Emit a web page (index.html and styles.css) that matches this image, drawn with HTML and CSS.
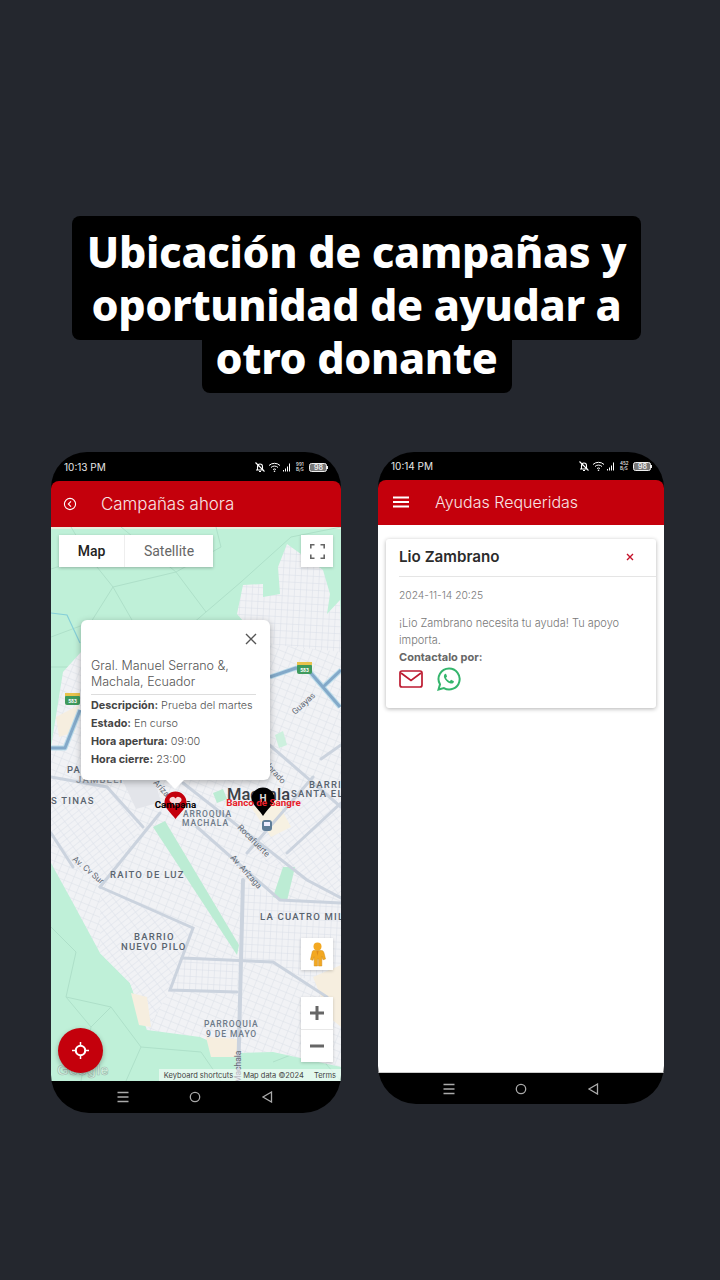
FILE: index.html
```html
<!DOCTYPE html>
<html lang="es">
<head>
<meta charset="utf-8">
<title>Ubicación de campañas</title>
<link rel="stylesheet" href="styles.css">
</head>
<body>
<svg class="defs" width="0" height="0" aria-hidden="true">
  <defs>
    <pattern id="gridA" width="8" height="7" patternUnits="userSpaceOnUse" patternTransform="rotate(22)">
      <rect width="8" height="7" fill="#f1f2f5"/>
      <path d="M0 0H8M0 0V7" stroke="#dbe0e8" stroke-width="1" fill="none"/>
    </pattern>
    <pattern id="gridB" width="9" height="5" patternUnits="userSpaceOnUse" patternTransform="rotate(-38)">
      <rect width="9" height="5" fill="#f1f2f5"/>
      <path d="M0 0H9M0 0V5" stroke="#dce1e9" stroke-width="1" fill="none"/>
    </pattern>
    <pattern id="gridC" width="6" height="7" patternUnits="userSpaceOnUse" patternTransform="rotate(3)">
      <rect width="6" height="7" fill="#f1f2f5"/>
      <path d="M0 0H6M0 0V7" stroke="#d9dfe8" stroke-width="1" fill="none"/>
    </pattern>
    <symbol id="status" viewBox="0 0 76 12">
      <path d="M3.500 9V5.500a2.500 2.500 0 0 1 5 0V9M2 9h8M5 10.500h2M1.500 1.500l9 9" fill="none" stroke="#fff" stroke-width="1.100"/>
      <path d="M15 4.500a8 8 0 0 1 11 0M17 6.500a5 5 0 0 1 7 0M19 8.500a2.500 2.500 0 0 1 3 0" fill="none" stroke="#fff" stroke-width="1"/>
      <circle cx="20.500" cy="10.300" r=".8" fill="#fff"/>
      <path d="M29 9h1v1.500h-1zM31 7.500h1v3h-1zM33 5.500h1v5h-1zM35 2.500h1v8h-1z" fill="#fff"/>
      <rect x="55.500" y="2.500" width="17" height="8" rx="2" fill="#777" stroke="#eee" stroke-width="1"/>
      <rect x="73" y="5" width="1" height="3" fill="#eee"/>
    </symbol>
  </defs>
</svg>

<header class="caption">
  <div class="caption-block caption-wide">Ubicación de campañas y<br>oportunidad de ayudar a</div>
  <div class="caption-block caption-narrow">otro donante</div>
</header>

<main class="phones">
  <section class="phone phone-left">
    <div class="status">
      <span class="clock">10:13 PM</span>
      <span class="status-icons">
        <svg class="status-svg" viewBox="0 0 76 12"><use href="#status"/></svg>
        <span class="speed">991<br>B/S</span>
        <span class="battery-num">98</span>
      </span>
    </div>
    <div class="appbar appbar-left">
      <svg class="back" viewBox="0 0 14 14"><circle cx="7" cy="7" r="5.600" fill="none" stroke="#fff" stroke-width="1.100"/><path d="M8 4.300L5.300 7 8 9.700" fill="none" stroke="#fff" stroke-width="1.100"/></svg>
      <h1 class="appbar-title appbar-title-left">Campañas ahora</h1>
    </div>
    <div class="map">
      <svg class="map-art" viewBox="0 0 290 554" width="290" height="554">
        <rect width="290" height="554" fill="#bff0d8"/>
        <rect width="290" height="2" fill="#e9ebdc"/>
        <g fill="none" stroke="#aee0c9" stroke-width="1">
          <path d="M0 42L38 30L62 60L40 95L0 110M62 60L125 45L170 20L165 0M38 30L20 0M62 60L85 100L55 140M125 45L155 85L120 115L85 100M155 85L190 55M70 0L125 45M190 55L240 10L290 0M120 115L150 135M0 140L55 140"/>
          <path d="M0 400L25 425L15 470L40 500L30 554M15 470L60 480L90 520L75 554M60 480L40 500M90 520L150 525L170 554M222 535L260 520L290 554"/>
        </g>
        <path d="M0 86L16 88L29 116" fill="none" stroke="#86cfd8" stroke-width="1.200"/>
        <path d="M236 17L272 43L279 67L276 87L289 73L290 110L290 130L219 125L186 87L192 58L212 57L212 70L229 67L227 40Z" fill="url(#gridC)"/>
        <path d="M0 220L12 145L30 125L150 110L200 115L290 125V540L222 525L186 526L149 510L96 503L79 456L49 426L22 376L0 336Z" fill="url(#gridA)"/>
        <path d="M142 401L119 463L186 465L192 353L229 373L290 376V470L222 435L131 431Z" fill="url(#gridC)"/>
        <path d="M49 360L142 401L119 463L96 503L79 456L49 426Z" fill="url(#gridB)"/>
        <path d="M196 326L262 250L290 276V371L256 353Z" fill="url(#gridB)"/>
        <path d="M0 250L56 260L92 300L49 360L22 340L0 306Z" fill="url(#gridB)"/>
        <path d="M102 300L114 294L188 418L186 428Z" fill="#bcecd4"/>
        <path d="M222 370L232 340L244 340L236 374Z" fill="#bcecd4"/>
        <path d="M162 266L172 262L176 272L166 276Z" fill="#bcecd4"/>
        <path d="M224 208L232 204L236 218L228 221Z" fill="#cdf0de"/>
        <path d="M80 466L96 470L100 500L88 498Z" fill="#f6eedf"/>
        <path d="M262 450L290 438V500L278 490Z" fill="#f6eedf"/>
        <path d="M155 510L186 512L186 530L160 530Z" fill="#f6eedf"/>
        <path d="M5 190L28 178L24 205L8 210Z" fill="#f6eedf"/>
        <path d="M200 280L225 272L240 300L220 310Z" fill="#f7f1e2"/>
        <path d="M70 250L100 240L110 275L85 282Z" fill="#e3e5ea"/>
        <g fill="none" stroke="#cbd3de" stroke-linecap="round">
          <g stroke-width="3">
            <path d="M49 360L142 401L119 463L186 465"/>
            <path d="M131 431L222 435L276 470"/>
            <path d="M49 360L109 286"/>
            <path d="M146 300L229 373L290 376"/>
            <path d="M132 256L256 353L290 371"/>
            <path d="M0 250L56 260L92 300"/>
            <path d="M196 326L262 250"/>
            <path d="M236 326L290 276"/>
            <path d="M0 306L22 340"/>
            <path d="M270 232L290 218"/>
            <path d="M215 215L290 280"/>
          </g>
          <path d="M192 353L187 554" stroke-width="4"/>
        </g>
        <g fill="none" stroke-linejoin="round">
          <path d="M0 221H14L29 183M219 150L245 141L259 145L289 180M290 143L272 160" stroke="#bcdcea" stroke-width="5"/>
          <path d="M0 221H14L29 183M219 150L245 141L259 145L289 180M290 143L272 160" stroke="#83a9c9" stroke-width="3"/>
        </g>
        <g>
          <rect x="14" y="168" width="15" height="10" rx="2" fill="#3f9a5d"/><rect x="14" y="166" width="15" height="3" fill="#e8c24c"/>
          <rect x="246" y="137" width="15" height="10" rx="2" fill="#3f9a5d"/><rect x="246" y="135" width="15" height="3" fill="#e8c24c"/>
          <text class="shield" x="21.500" y="176">583</text>
          <text class="shield" x="253.500" y="145">583</text>
        </g>
        <g class="label">
          <text x="16" y="246">PA</text>
          <text x="25" y="256" class="label-faint">JAMBELI</text>
          <text x="0" y="277">S TINAS</text>
          <text x="59" y="351">RAITO DE LUZ</text>
          <text x="209" y="393">LA CUATRO MIL</text>
          <text x="83" y="413">BARRIO</text>
          <text x="70" y="423">NUEVO PILO</text>
          <text x="153" y="500" class="label-small">PARROQUIA</text>
          <text x="155" y="510" class="label-small">9 DE MAYO</text>
          <text x="132" y="290" class="label-small">ARROQUIA</text>
          <text x="131" y="299" class="label-small">MACHALA</text>
          <text x="258" y="261">BARRI</text>
          <text x="240" y="270">SANTA EL</text>
        </g>
        <g class="road-label">
          <text transform="translate(21 333) rotate(40)">Av. Cv Sur</text>
          <text transform="translate(179 331) rotate(48)">Av. Arízaga</text>
          <text transform="translate(186 301) rotate(45)">Rocafuerte</text>
          <text transform="translate(244 188) rotate(-42)">Guayas</text>
          <text transform="translate(190 556) rotate(-90)">Machala</text>
          <text transform="translate(208 232) rotate(48)">Colorado</text>
          <text transform="translate(102 256) rotate(48)">Arízaga</text>
        </g>
        <text class="city" x="176" y="273">Machala</text>
        <path d="M124.500 292C120 286 113.500 281 113.500 275.500a11 11 0 0 1 22 0C135.500 281 129 286 124.500 292Z" fill="#c4000c"/>
        <path d="M124.500 279l-5.500-4.500a3 3 0 0 1 5.500-3 3 3 0 0 1 5.500 3Z" fill="#f6dada"/>
        <text class="pin-label" x="124.500" y="281">Campaña</text>
        <path d="M212 289C207.500 282 200.500 277 200.500 272a11.500 11.500 0 0 1 23 0C223.500 277 216.500 282 212 289Z" fill="#000"/>
        <text class="pin-h" x="212" y="275">H</text>
        <text class="pin-label pin-red" x="212.500" y="279">Banco de Sangre</text>
        <rect x="211" y="293" width="10" height="11" rx="3" fill="#5f7d97"/>
        <rect x="213" y="295" width="6" height="4" fill="#eef"/>
      </svg>

      <div class="map-type">
        <span class="map-tab map-tab-on">Map</span>
        <span class="map-tab">Satellite</span>
      </div>
      <button class="map-btn fullscreen" aria-label="Pantalla completa">
        <svg viewBox="0 0 15 15" width="15" height="15"><path d="M.8 4.500V.8h3.700M10.500.8h3.700v3.700M14.200 10.500v3.700h-3.700M4.500 14.200H.8v-3.700" fill="none" stroke="#666" stroke-width="1.600"/></svg>
      </button>
      <button class="map-btn pegman" aria-label="Street View">
        <svg viewBox="0 0 17 25" width="17" height="25"><circle cx="8.500" cy="4.500" r="4" fill="#f3a821"/><path d="M4.500 8.500h8c1.500 0 2 1 2.500 2.500l1.500 6-2.500.8-1.200-3.500V24h-3.300v-7h-1v7H5.200V14.800L4 18.300l-2.500-.8L3 11c.3-1.500.5-2.500 1.500-2.500Z" fill="#f3a821" stroke="#cf8a14" stroke-width=".5"/><path d="M7.500 9h2l-1 5z" fill="#dd8a1c"/></svg>
      </button>
      <div class="zoom-ctl">
        <span class="zoom-btn">
          <svg viewBox="0 0 16 16" width="16" height="16"><path d="M8 1v14M1 8h14" stroke="#666" stroke-width="3"/></svg>
        </span>
        <span class="zoom-btn">
          <svg viewBox="0 0 16 16" width="16" height="16"><path d="M1 8h14" stroke="#666" stroke-width="3"/></svg>
        </span>
      </div>
      <div class="popup">
        <svg class="popup-close" viewBox="0 0 12 12" width="12" height="12"><path d="M1 1l10 10M11 1L1 11" stroke="#555" stroke-width="1.400"/></svg>
        <p class="popup-addr">Gral. Manuel Serrano &amp;, Machala, Ecuador</p>
        <ul class="popup-list">
          <li><b>Descripción:</b> Prueba del martes</li>
          <li><b>Estado:</b> En curso</li>
          <li><b>Hora apertura:</b> 09:00</li>
          <li><b>Hora cierre:</b> 23:00</li>
        </ul>
      </div>
      <span class="popup-tail"></span>
      <span class="google">Google</span>
      <div class="map-foot">
        <span>Keyboard shortcuts</span><span>Map data ©2024</span><span>Terms</span>
      </div>
      <button class="fab" aria-label="Mi ubicación">
        <svg viewBox="0 0 18 18" width="17" height="17"><circle cx="9" cy="9" r="5" fill="none" stroke="#fff" stroke-width="2.200"/><path d="M9 0v3.500M9 14.500V18M0 9h3.500M14.500 9H18" stroke="#fff" stroke-width="1.600"/></svg>
      </button>
    </div>
    <div class="navbar navbar-left">
      <svg class="nav-ico" viewBox="0 0 12 12" width="12" height="12"><path d="M.5 1.500h11M.5 6h11M.5 10.500h11" stroke="#aaa" stroke-width="1.300"/></svg>
      <svg class="nav-ico" viewBox="0 0 12 12" width="12" height="12"><circle cx="6" cy="6" r="4.700" fill="none" stroke="#aaa" stroke-width="1.300"/></svg>
      <svg class="nav-ico" viewBox="0 0 12 12" width="12" height="12"><path d="M10.500 1L2 6l8.500 5Z" fill="none" stroke="#aaa" stroke-width="1.300"/></svg>
    </div>
  </section>

  <section class="phone phone-right">
    <div class="status status-right">
      <span class="clock">10:14 PM</span>
      <span class="status-icons">
        <svg class="status-svg" viewBox="0 0 76 12"><use href="#status"/></svg>
        <span class="speed">452<br>B/S</span>
        <span class="battery-num">98</span>
      </span>
    </div>
    <div class="appbar appbar-right">
      <svg class="burger" viewBox="0 0 16 12" width="16" height="12"><path d="M0 1.500h16M0 6h16M0 10.500h16" stroke="#fff" stroke-width="1.800"/></svg>
      <h1 class="appbar-title">Ayudas Requeridas</h1>
    </div>
    <div class="content">
      <article class="card">
        <div class="card-head">
          <h2 class="card-name">Lio Zambrano</h2>
          <svg class="card-x" viewBox="0 0 8 8" width="8" height="8"><path d="M1 1l6 6M7 1L1 7" stroke="#c4122a" stroke-width="1.400"/></svg>
        </div>
        <div class="card-body">
          <p class="card-date">2024-11-14 20:25</p>
          <p class="card-text">¡Lio Zambrano necesita tu ayuda! Tu apoyo importa.</p>
          <p class="card-contact">Contactalo por:</p>
          <div class="card-icons">
            <svg viewBox="0 0 24 18" width="24" height="18"><rect x="1" y="1" width="22" height="16" rx="2" fill="none" stroke="#bd1a30" stroke-width="1.700"/><path d="M2 3l10 7.500L22 3" fill="none" stroke="#bd1a30" stroke-width="1.700"/></svg>
            <svg viewBox="0 0 24 24" width="24" height="24"><path d="M12 1.500a10.500 10.500 0 0 0-9 15.800L1.500 22.500l5.400-1.400A10.500 10.500 0 1 0 12 1.500Z" fill="none" stroke="#34b56c" stroke-width="2"/><path d="M8.700 6.800c-.4 0-1 .2-1.300.8-.5.8-.7 1.900-.2 3.100 1 2.500 3.100 4.600 5.700 5.600 1.300.5 2.500.3 3.300-.4.500-.4.700-1 .7-1.600 0-.2-.1-.3-.3-.4l-2.200-1c-.2-.1-.4-.1-.5.100l-.9 1.100c-.1.200-.3.200-.5.100-1.500-.6-2.700-1.700-3.400-3.100-.1-.2-.1-.3.100-.5l.7-.9c.1-.1.100-.3.100-.5l-.9-2.100c-.1-.2-.2-.3-.4-.3Z" fill="#34b56c"/></svg>
          </div>
        </div>
      </article>
    </div>
    <div class="navbar navbar-right">
      <svg class="nav-ico" viewBox="0 0 12 12" width="12" height="12"><path d="M.5 1.500h11M.5 6h11M.5 10.500h11" stroke="#aaa" stroke-width="1.300"/></svg>
      <svg class="nav-ico" viewBox="0 0 12 12" width="12" height="12"><circle cx="6" cy="6" r="4.700" fill="none" stroke="#aaa" stroke-width="1.300"/></svg>
      <svg class="nav-ico" viewBox="0 0 12 12" width="12" height="12"><path d="M10.500 1L2 6l8.500 5Z" fill="none" stroke="#aaa" stroke-width="1.300"/></svg>
    </div>
  </section>
</main>
</body>
</html>
```

FILE: styles.css
```css
* { box-sizing: border-box; }
html, body { margin: 0; padding: 0; }
body {
  width: 720px;
  height: 1280px;
  overflow: hidden;
  background: #24272e;
  padding-top: 216px;
  font-family: Inter, "Liberation Sans", sans-serif;
}
.defs { position: absolute; }

.caption {
  display: flex;
  flex-direction: column;
  align-items: center;
  padding-right: 7px;
  font-family: "Noto Sans", sans-serif;
  font-weight: 800;
  font-size: 43px;
  letter-spacing: -.35px;
  line-height: 53px;
  color: #fff;
  text-align: center;
}
.caption-block { background: #000; border-radius: 8px; white-space: nowrap; }
.caption-wide { width: 569px; padding: 9px 0; }
.caption-narrow { width: 310px; height: 53px; border-radius: 0 0 8px 8px; line-height: 36px; }

.phones {
  display: flex;
  align-items: flex-start;
  gap: 37px;
  margin-top: 59px;
  padding-left: 51px;
}
.phone {
  display: flex;
  flex-direction: column;
  background: #000;
  overflow: hidden;
  border-radius: 36px 36px 38px 38px;
}
.phone-left { width: 290px; height: 661px; }
.phone-right { width: 286px; height: 652px; }

.status {
  height: 29px;
  flex: none;
  display: flex;
  align-items: center;
  justify-content: space-between;
  padding: 1px 11px 0 13px;
  color: #e6e6e6;
  font-size: 10px;
}
.status-right { height: 28px; padding: 0 10px 0 13px; }
.status-icons { position: relative; display: block; width: 76px; height: 12px; }
.status-svg { display: block; width: 76px; height: 12px; }
.speed {
  position: absolute;
  left: 42px;
  top: 2px;
  font-size: 4.500px;
  line-height: 4.500px;
  font-weight: 600;
  color: #ddd;
  white-space: nowrap;
}
.battery-num {
  position: absolute;
  left: 60px;
  top: 2px;
  font-size: 7px;
  line-height: 9px;
  font-weight: 600;
  color: #eee;
}

.appbar {
  flex: none;
  display: flex;
  align-items: center;
  background: #c4000c;
  border-radius: 8px 8px 0 0;
}
.appbar-left { height: 46px; padding: 0 0 1px 12px; gap: 24px; }
.appbar-right { height: 45px; padding: 0 0 2px 15px; gap: 26px; }
.back { width: 14px; height: 14px; flex: none; }
.burger { flex: none; }
.appbar-title {
  margin: 0;
  color: #f8e4e4;
  font-size: 16px;
  font-weight: 300;
  line-height: 20px;
  white-space: nowrap;
}
.appbar-title-left { font-size: 16.900px; }

.map { position: relative; flex: none; height: 554px; overflow: hidden; }
.map-art { display: block; }
.map-art text { font-family: Roboto, sans-serif; }
.shield { font-size: 5px; fill: #fff; text-anchor: middle; font-weight: 700; }
.label text { font-size: 9.500px; font-weight: 500; letter-spacing: 1.200px; fill: #59636e; }
.label .label-small { font-size: 8.500px; letter-spacing: .9px; fill: #6d7a88; }
.label .label-faint { fill: #8a929b; }
.road-label text { font-size: 8.500px; fill: #5f6873; }
.map-art .city { font-size: 16.500px; font-weight: 500; fill: #3c4148; }
.map-art .pin-h { font-size: 10px; font-weight: 700; text-anchor: middle; fill: #ddd; }
.map-art .pin-label {
  font-size: 9.800px;
  font-weight: 700;
  text-anchor: middle;
  fill: #000;
}
.map-art .pin-red { fill: #e8202a; }

.map-type {
  position: absolute;
  left: 8px;
  top: 8px;
  display: flex;
  height: 32px;
  background: #fff;
  box-shadow: 0 1px 3px rgba(0, 0, 0, .25);
  font-family: Roboto, sans-serif;
  font-size: 14px;
  color: #666;
}
.map-tab { display: flex; align-items: center; justify-content: center; width: 88px; }
.map-tab-on { width: 66px; color: #222; font-weight: 500; border-right: 1px solid #eee; }
.map-btn {
  position: absolute;
  display: flex;
  align-items: center;
  justify-content: center;
  left: 250px;
  width: 32px;
  height: 32px;
  padding: 0;
  border: 0;
  background: #fff;
  box-shadow: 0 1px 3px rgba(0, 0, 0, .2);
}
.fullscreen { top: 8px; }
.pegman { top: 411px; }
.zoom-ctl {
  position: absolute;
  left: 250px;
  top: 470px;
  width: 32px;
  height: 65px;
  display: flex;
  flex-direction: column;
  background: #fff;
  box-shadow: 0 1px 3px rgba(0, 0, 0, .2);
}
.zoom-btn { flex: 1; display: flex; align-items: center; justify-content: center; }
.zoom-btn + .zoom-btn { border-top: 1px solid #e8e8e8; }

.popup {
  position: absolute;
  left: 30px;
  top: 93px;
  width: 189px;
  height: 160px;
  padding: 38px 10px 0 10px;
  background: #fff;
  border-radius: 6px;
  box-shadow: 0 2px 7px rgba(0, 0, 0, .3);
  color: #555;
}
.popup-close { position: absolute; right: 13px; top: 13px; }
.popup-addr {
  margin: 0 4px 0 0;
  font-size: 12.500px;
  font-weight: 300;
  line-height: 16px;
  padding-bottom: 4px;
  border-bottom: 1px solid #ddd;
}
.popup-list { list-style: none; margin: 2px 0 0; padding: 0; font-size: 10.800px; font-weight: 300; line-height: 18px; white-space: nowrap; }
.popup-list b { font-weight: 700; color: #444; }
.popup-tail {
  position: absolute;
  left: 115px;
  top: 253px;
  width: 0;
  height: 0;
  border-left: 9px solid transparent;
  border-right: 9px solid transparent;
  border-top: 9px solid #fff;
}

.google {
  position: absolute;
  left: 6px;
  top: 534px;
  font-family: "Liberation Sans", sans-serif;
  font-size: 15px;
  line-height: 18px;
  font-weight: 700;
  color: rgba(230, 240, 235, .5);
  -webkit-text-stroke: .6px rgba(130, 150, 140, .6);
}
.map-foot {
  position: absolute;
  right: 0;
  bottom: 0;
  display: flex;
  gap: 10px;
  height: 12px;
  padding: 0 5px;
  align-items: center;
  background: rgba(255, 255, 255, .55);
  font-size: 7.500px;
  color: #444;
  white-space: nowrap;
}
.fab {
  position: absolute;
  left: 7px;
  top: 501px;
  width: 45px;
  height: 45px;
  padding: 0;
  border: 0;
  border-radius: 50%;
  background: #c4000c;
  display: flex;
  align-items: center;
  justify-content: center;
  box-shadow: 0 2px 5px rgba(0, 0, 0, .3);
}

.navbar { flex: 1; display: flex; align-items: center; }
.navbar-left { padding-left: 66px; gap: 60px; }
.navbar-right { padding-left: 65px; gap: 60px; }
.nav-ico { flex: none; }

.content { flex: none; height: 548px; background: #fff; padding: 14px 8px 0; border-bottom: 1px solid #ccc; }
.card {
  height: 169px;
  background: #fff;
  border-radius: 3px;
  box-shadow: 0 1px 4px rgba(0, 0, 0, .3);
}
.card-head {
  display: flex;
  align-items: center;
  justify-content: space-between;
  height: 38px;
  margin-left: 13px;
  padding: 0 22px 2px 0;
  border-bottom: 1px solid #e5e5e5;
}
.card-name { margin: 0; font-size: 15.200px; font-weight: 600; color: #2b2b2b; white-space: nowrap; }
.card-body { padding: 10px 0 0 13px; color: #777; font-size: 11px; font-weight: 300; }
.card-date { margin: 0 0 12px; line-height: 16px; font-size: 10.300px; }
.card-text { margin: 0; width: 240px; line-height: 17px; }
.card-contact { margin: 0; line-height: 16px; font-weight: 700; color: #666; }
.card-icons { display: flex; align-items: center; gap: 14px; margin-top: 2px; }
```
